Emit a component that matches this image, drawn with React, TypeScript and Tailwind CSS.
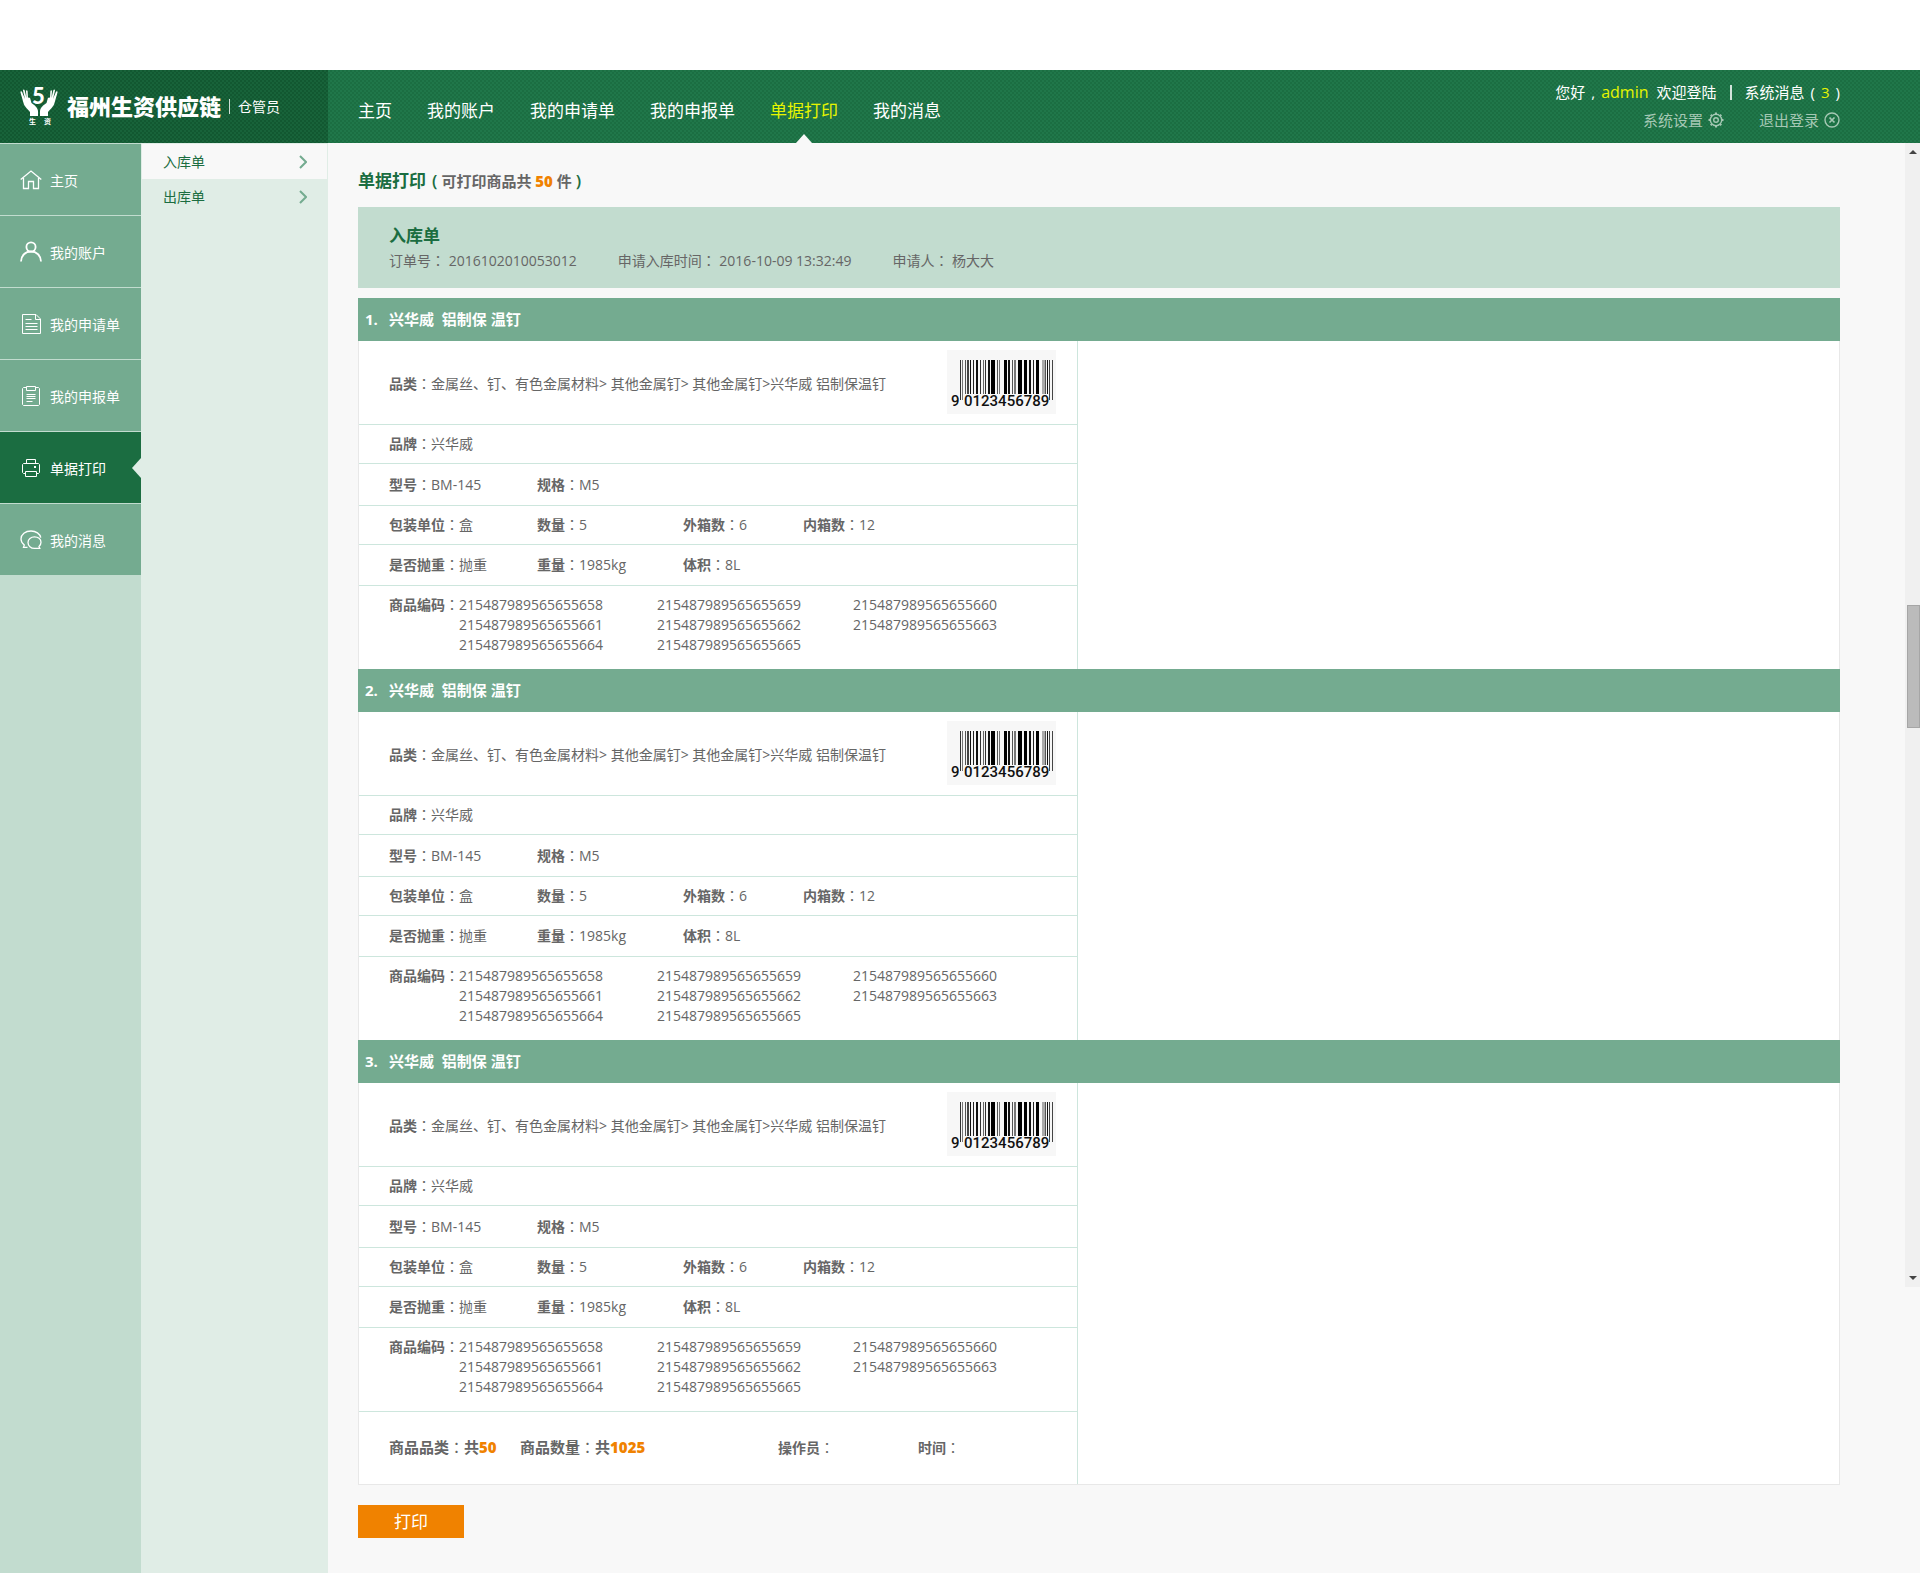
import { ReactNode } from "react"

interface Product {
  name: string,
  category: string,
  brand: string,
  model: string,
  spec: string,
  unit: string,
  count: number,
  outerBoxes: number,
  innerBoxes: number,
  bulky: string,
  weight: string,
  volume: string,
  codes: string[]
}

const product: Product = {
  name: "兴华威\u00a0 铝制保 温钉",
  category: "金属丝、钉、有色金属材料> 其他金属钉> 其他金属钉>兴华威 铝制保温钉",
  brand: "兴华威",
  model: "BM-145",
  spec: "M5",
  unit: "盒",
  count: 5,
  outerBoxes: 6,
  innerBoxes: 12,
  bulky: "抛重",
  weight: "1985kg",
  volume: "8L",
  codes: [
    "215487989565655658",
    "215487989565655659",
    "215487989565655660",
    "215487989565655661",
    "215487989565655662",
    "215487989565655663",
    "215487989565655664",
    "215487989565655665"
  ]
}

const products: Product[] = [product, product, product]

const navItems = ["主页", "我的账户", "我的申请单", "我的申报单", "单据打印", "我的消息"]
const activeItem = "单据打印"

// x, width, shade and length of every bar
const bars: [number, number, string, number][] = [
  [13, 1, "#333", 40], [15, 1, "#777", 40], [18, 1, "#555", 34], [20, 2, "#444", 34], [23, 1, "#111", 34],
  [26, 1, "#222", 34], [29, 2, "#111", 34], [33, 1, "#333", 34], [36, 1, "#666", 34], [38, 1, "#333", 34],
  [41, 2, "#111", 34], [44, 4, "#000", 34], [50, 1, "#555", 34], [52, 1, "#777", 34], [57, 3, "#000", 34],
  [61, 2, "#111", 34], [65, 1, "#555", 34], [67, 2, "#777", 34], [71, 4, "#000", 34], [77, 3, "#000", 34],
  [82, 2, "#111", 34], [86, 1, "#222", 34], [89, 3, "#000", 34], [95, 3, "#aaa", 34], [98, 1, "#555", 34],
  [100, 1, "#111", 34], [102, 1, "#444", 40], [105, 1, "#444", 40]
]

const Barcode = () => (
  <svg width="109" height="64" viewBox="0 0 109 64" role="img" aria-label="9 0123456789">
    <rect width="109" height="64" fill="#f7f7f7" />
    {bars.map(([x, width, fill, height]) => (
      <rect key={x} x={x} y="10" width={width} height={height} fill={fill} />
    ))}
    <text x="4" y="56" fontSize="15" fontWeight="500" fontFamily="Roboto, sans-serif" fill="#111">9</text>
    <text x="17" y="56" fontSize="15" fontWeight="500" fontFamily="Roboto, sans-serif" fill="#111">0123456789</text>
  </svg>
)

const Logo = () => (
  <svg width="38" height="50" viewBox="0 -5 38 50" fill="#fff" aria-hidden="true">
    <text x="12" y="17" fontSize="22" fontWeight="900" fontFamily="Lato, sans-serif">5</text>
    <path d="M8 11 C9 10 10.500 11 10.500 12.500 L11.500 16 C14 18 17.500 20 18 24 L18 29 L10 29 L10 25 C8 22 4.500 20 3.500 16 L.5 5.500 C.3 4 1.700 4 2.100 5 L5 12 L3 3.500 C3 2 4.500 2.200 4.700 3.500 L6.500 11 L6 4 C6 3 7.500 3 7.600 4 Z" />
    <path d="M30 11 C29 10 27.500 11 27.500 12.500 L26.500 16 C24 18 20.500 20 20 24 L20 29 L28 29 L28 25 C30 22 33.500 20 34.500 16 L37.500 5.500 C37.700 4 36.300 4 35.900 5 L33 12 L35 3.500 C35 2 33.500 2.200 33.300 3.500 L31.500 11 L32 4 C32 3 30.500 3 30.400 4 Z" />
    <text x="9" y="37" fontSize="7" fontWeight="700" fontFamily="Noto Sans CJK SC, sans-serif">生</text>
    <text x="24" y="37" fontSize="7" fontWeight="700" fontFamily="Noto Sans CJK SC, sans-serif">资</text>
  </svg>
)

const icons: Record<string, ReactNode> = {
  "主页": <path d="M.7 10.500 11 2l10.300 8.500M3.500 9v10.500h5v-7h5v7h5V9" strokeWidth="1.300" />,
  "我的账户": (
    <g strokeWidth="1.800">
      <circle cx="11" cy="6" r="4.600" />
      <path d="M1 20.500c0-6 4.500-10 10-10s10 4 10 10" />
    </g>
  ),
  "我的申请单": (
    <g>
      <path d="M2.500 1.500h13.500l4.500 4.500v14.500h-18zM15.500 1.500v5h5" />
      <path d="M5.500 6.500h6M5.500 10.500h12M5.500 13.500h12M5.500 16.500h12" />
    </g>
  ),
  "我的申报单": (
    <g>
      <path d="M6.500 2.500h-3l-1 1v16l1 1h15l1-1v-16l-1-1h-3M6.500 1.500h9v4h-9z" />
      <path d="M6.500 9.500h9M6.500 11.500h9M6.500 13.500h9M6.500 16.500h6" />
    </g>
  ),
  "单据打印": (
    <g>
      <path d="M6.500 6.500v-4h9v4M5.500 16.500h-2l-1-1v-8l1-1h15l1 1v8l-1 1h-2M5.500 14.500h11v5h-11z" />
      <path d="M14 10h2" strokeWidth="2" />
    </g>
  ),
  "我的消息": (
    <g strokeWidth="1.300">
      <path d="M7.500 18.300H3.500l.8-2.300C2.300 14.500 1 12.400 1 10c0-4.500 4.300-8 10-8 5 0 9 2.800 9.800 6.700" />
      <path d="M14.500 7.800c3.700 0 6.500 2.300 6.500 5.400 0 1.900-.8 3.200-2 4.200l.8 2h-5.300c-3.600 0-6.500-2.600-6.500-6 0-3.200 2.900-5.600 6.500-5.600z" />
    </g>
  )
}

const SideIcon = ({ name }: { name: string }) => (
  <svg width="22" height="22" viewBox="0 0 22 22" fill="none" stroke="#fff" strokeWidth="1" aria-hidden="true">
    {icons[name]}
  </svg>
)

const GearIcon = () => (
  <svg width="16" height="16" viewBox="0 0 16 16" fill="none" stroke="currentColor" aria-hidden="true">
    <circle cx="8" cy="8" r="5.700" strokeWidth="1.400" />
    <circle cx="8" cy="8" r="2.300" strokeWidth="1.400" />
    <path d="M8 .5v1.800M8 13.700v1.800M.5 8h1.800M13.700 8h1.800M2.700 2.700l1.200 1.200M12.100 12.100l1.200 1.200M2.700 13.300l1.200-1.200M12.100 3.900l1.200-1.200" strokeWidth="2" />
  </svg>
)

const CloseIcon = () => (
  <svg width="16" height="16" viewBox="0 0 16 16" fill="none" stroke="currentColor" aria-hidden="true">
    <circle cx="8" cy="8" r="7" strokeWidth="1.400" />
    <path d="M5.500 5.500l5 5M10.500 5.500l-5 5" strokeWidth="1.700" />
  </svg>
)

// The TC face centres its punctuation in the em box
const Colon = () => <span className="font-['Noto_Sans_CJK_TC',sans-serif] leading-none font-normal">：</span>

const Field = ({ label, children }: { label: string, children?: ReactNode }) => (
  <div className="flex items-baseline">
    <dt className="font-semibold">{label}<Colon /></dt>
    <dd>{children}</dd>
  </div>
)

const Row = ({ height, children }: { height: string, children: ReactNode }) => (
  <dl className={`grid grid-cols-[148px_146px_120px_1fr] items-center border-b border-[#cde6dd] pl-[30px] ${height}`}>
    {children}
  </dl>
)

const ProductBlock = ({ item, index, last }: { item: Product, index: number, last: boolean }) => (
  <section>
    <h3 className="flex h-[43px] items-center bg-[#74ab90] pl-[7px] text-[15px] font-bold text-white">
      <span className="w-6">{index + 1}.</span>
      <span>{item.name}</span>
    </h3>
    <div className="flex border-x border-[#e8e8e8] bg-white">
      <div className="w-[719px] border-r border-[#cde6dd] text-sm">
        <div className="flex h-[84px] items-start justify-between border-b border-[#cde6dd] pt-[9px] pr-[21px] pl-[30px]">
          <dl className="pt-6">
            <Field label="品类">{item.category}</Field>
          </dl>
          <Barcode />
        </div>
        <Row height="h-[39px]">
          <Field label="品牌">{item.brand}</Field>
        </Row>
        <Row height="h-[42px]">
          <Field label="型号">{item.model}</Field>
          <Field label="规格">{item.spec}</Field>
        </Row>
        <Row height="h-[39px]">
          <Field label="包装单位">{item.unit}</Field>
          <Field label="数量">{item.count}</Field>
          <Field label="外箱数">{item.outerBoxes}</Field>
          <Field label="内箱数">{item.innerBoxes}</Field>
        </Row>
        <Row height="h-[41px]">
          <Field label="是否抛重">{item.bulky}</Field>
          <Field label="重量">{item.weight}</Field>
          <Field label="体积">{item.volume}</Field>
        </Row>
        <dl className="flex h-[83px] items-baseline pt-[9px] pl-[30px]">
          <dt className="font-semibold">商品编码<Colon /></dt>
          <dd className="grid flex-1 auto-rows-[20px] grid-cols-[198px_196px_1fr]">
            {item.codes.map((code) => <span key={code}>{code}</span>)}
          </dd>
        </dl>
        {last && <Summary />}
      </div>
      <div className="flex-1" />
    </div>
  </section>
)

const Summary = () => (
  <div className="flex h-[73px] items-center border-t border-[#cde6dd] pl-[30px] text-[15px] font-semibold">
    <p className="w-[131px]">商品品类<Colon />共<b className="text-[#f08200]">50</b></p>
    <p className="w-[258px]">商品数量<Colon />共<b className="text-[#f08200]">1025</b></p>
    <p className="w-[140px] text-sm">操作员<Colon /></p>
    <p className="text-sm">时间<Colon /></p>
  </div>
)

const Header = () => (
  <header className="flex h-[73px] text-white">
    <div className="flex w-[328px] items-center bg-[repeating-conic-gradient(#125831_0_25%,#18633a_0_50%)] bg-[length:4px_4px] pl-5">
      <Logo />
      <span className="ml-[9px] text-[22px] font-black">福州生资供应链</span>
      <span className="ml-2 h-[15px] w-px bg-white/80" />
      <span className="ml-2 text-sm">仓管员</span>
    </div>
    <div className="flex flex-1 justify-between bg-[repeating-conic-gradient(#1b6e42_0_25%,#20774a_0_50%)] bg-[length:4px_4px] pr-20 pl-[30px]">
      <nav className="flex gap-[35px] text-[17px]">
        {navItems.map((item) => (
          <a key={item} href="#" className={`relative flex items-center pt-2 ${item === activeItem ? "text-[#e6f500]" : ""}`}>
            {item}
            {item === activeItem && (
              <span className="absolute bottom-0 left-1/2 -ml-2 border-x-8 border-b-9 border-x-transparent border-b-[#f8f8f8]" />
            )}
          </a>
        ))}
      </nav>
      <div className="flex flex-col items-end gap-1 pt-[10px] text-[15px] leading-6">
        <p className="flex items-center">
          <span>您好</span>
          <span className="mx-[6px]">,</span>
          <span className="text-base leading-6 text-[#e6f500]">admin</span>
          <span className="ml-2">欢迎登陆</span>
          <span className="mx-[13px] h-[15px] w-[2px] bg-white/80" />
          <span>系统消息</span>
          <span className="ml-[6px]">(</span>
          <span className="mx-[6px] text-[#e6f500]">3</span>
          <span>)</span>
        </p>
        <div className="flex gap-[35px] text-[#a5c8b4]">
          <a href="#" className="flex items-center gap-[5px]">系统设置 <GearIcon /></a>
          <a href="#" className="flex items-center gap-[5px]">退出登录 <CloseIcon /></a>
        </div>
      </div>
    </div>
  </header>
)

const Sidebar = () => (
  <nav className="w-[141px] bg-[#c2dccf] text-sm text-white">
    {navItems.map((item) => (
      <a key={item} href="#" className={`relative flex h-[72px] items-center gap-2 border-t border-[#c2dccf] pl-5 ${item === activeItem ? "bg-[#1b6d41]" : "bg-[#74ab90]"}`}>
        <SideIcon name={item} />
        <span className="pt-[2px]">{item}</span>
        {item === activeItem && (
          <span className="absolute right-0 border-y-10 border-r-9 border-y-transparent border-r-[#e0ede6]" />
        )}
      </a>
    ))}
  </nav>
)

const SubMenu = () => (
  <nav className="w-[187px] border border-b-0 border-[#e0ede6] bg-[#e0ede6] text-sm text-[#1b6d41]">
    {["入库单", "出库单"].map((item, index) => (
      <a key={item} href="#" className={`flex h-[35px] items-center justify-between pr-5 pl-[21px] ${index === 0 ? "bg-[#f8f8f8]" : ""}`}>
        {item}
        <svg width="8" height="14" viewBox="0 0 8 14" fill="none" stroke="#74ab90" strokeWidth="2" aria-hidden="true">
          <path d="M1 1l6 6-6 6" />
        </svg>
      </a>
    ))}
  </nav>
)

const ScrollBar = () => (
  <div className="flex h-[1144px] w-[15px] flex-col items-center bg-[#f0f0f0] pt-[7px] pb-[7px]">
    <span className="border-x-4 border-b-4 border-x-transparent border-b-[#444]" />
    <span className="mt-[451px] h-[123px] w-[13px] self-end border border-[#a6a6a6] bg-[#bbb]" />
    <span className="mt-auto border-x-4 border-t-4 border-x-transparent border-t-[#444]" />
  </div>
)

const App = () => {
  return (
    <div className="flex min-h-screen flex-col bg-white pt-[70px] font-['Open_Sans','Noto_Sans_CJK_SC',sans-serif] text-[#666]">
      <Header />
      <div className="flex flex-1 bg-[#f8f8f8]">
        <Sidebar />
        <SubMenu />
        <main className="flex-1 pr-[65px] pb-[35px] pl-[30px]">
          <h1 className="flex h-16 items-center pt-3 text-[17px] font-semibold text-[#1b6d41]">
            单据打印
            <span className="ml-[6px]">(</span>
            <span className="mx-1 text-[15px] text-[#666]">可打印商品共 <b className="text-[#f08200]">50</b> 件</span>
            <span>)</span>
          </h1>
          <div className="h-[81px] bg-[#c2dccf] pt-[17px] pl-[31px]">
            <h2 className="text-[17px] leading-6 font-semibold text-[#1b6d41]">入库单</h2>
            <p className="flex gap-[41px] text-sm leading-[26px]">
              <span>订单号<Colon /> 2016102010053012</span>
              <span>申请入库时间<Colon /> 2016-10-09 13:32:49</span>
              <span>申请人<Colon /> 杨大大</span>
            </p>
          </div>
          <div className="mt-[10px] border-b border-[#e8e8e8]">
            {products.map((item, index) => (
              <ProductBlock key={index} item={item} index={index} last={index === products.length - 1} />
            ))}
          </div>
          <button className="mt-5 h-[33px] w-[106px] cursor-pointer bg-[#f08200] text-[17px] text-white">打印</button>
        </main>
        <ScrollBar />
      </div>
    </div>
  )
}

export default App
